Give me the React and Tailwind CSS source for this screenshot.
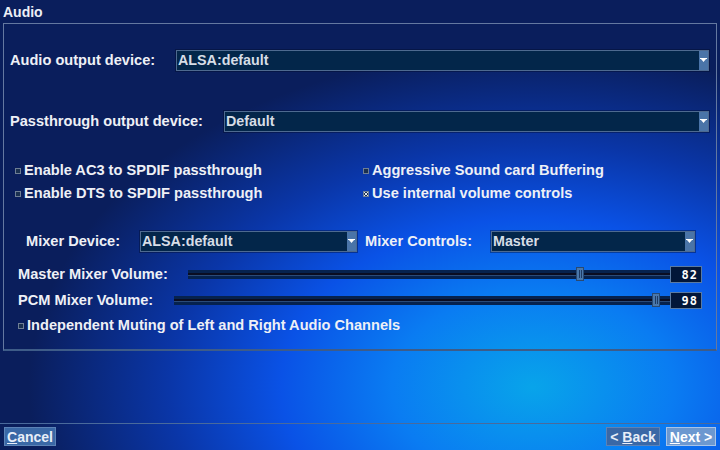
const font = { fontFamily: '"Liberation Sans", Arial, sans-serif' };

const Arrow = () => (
    <div className="w-[9px] h-full bg-[#4a74a8] flex items-center justify-center shrink-0">
        <svg width="7" height="5" viewBox="0 0 7 5">
            <rect x="0" y="0" width="7" height="1" fill="#ffffff" />
            <path d="M1 1 L6 1 L3.5 4 Z" fill="#ffffff" />
        </svg>
    </div>
);

const Select = ({ value, className }) => (
    <div
        className={`flex items-stretch bg-[#03264a] border border-[#4e6a90] h-[21px] shadow-[0_0_0_1px_rgba(0,10,40,0.4)] ${className}`}
    >
        <div className="flex-1 flex items-center pl-[1px] text-[14.3px] font-bold text-[#d6dde6] leading-none">
            {value}
        </div>
        <Arrow />
    </div>
);

const Check = ({ checked }) => (
    <div className="w-[6px] h-[6px] bg-[#1a3050] border border-[#6e7e94] flex items-center justify-center shrink-0">
        {checked && (
            <svg width="4" height="4" viewBox="0 0 4 4">
                <path d="M0 0 L4 4 M4 0 L0 4" stroke="#e0e6ee" strokeWidth="1" />
            </svg>
        )}
    </div>
);

const CheckRow = ({ label, checked, className }) => (
    <div className={`flex items-center gap-[3px] h-[23px] ${className}`}>
        <Check checked={checked} />
        <span className="text-[14.6px] font-bold text-[#eef0f6] leading-none">{label}</span>
    </div>
);

const Slider = ({ pos, className }) => (
    <div className={`relative h-[9px] bg-[#06224e] ${className}`}>
        <div className="absolute left-0 right-0 top-[3px] h-[2px] bg-[#0a0d22]" />
        <div className="absolute left-0 right-0 top-[5px] h-[1px] bg-[#2a4a78]" />
        <div
            className="absolute top-[-3px] w-[8px] h-[14px] bg-[#4a78ac] border border-[#2a4a72] flex justify-center gap-[1px] pt-[2px]"
            style={{ left: pos }}
        >
            <div className="w-[1px] h-[8px] bg-[#1e3a64]" />
            <div className="w-[1px] h-[8px] bg-[#1e3a64]" />
        </div>
    </div>
);

const ValueBox = ({ value }) => (
    <div className="w-[32px] h-[17px] bg-[#021638] border border-[#5a7aa2] flex items-center justify-end pr-[3px] text-[12px] font-bold text-white leading-none tracking-[1px]" style={{ fontFamily: '"DejaVu Sans Mono", monospace' }}>
        {value}
    </div>
);

const Button = ({ children, focused, className }) => (
    <div
        className={`h-[19px] flex items-center justify-center whitespace-nowrap text-[14px] font-bold leading-none border ${
            focused
                ? "bg-[#6c98d0] border-[#a8c4e8] text-white"
                : "bg-[#3a68a6] border-[#5c82b6] text-[#e8eef8]"
        } ${className}`}
    >
        {children}
    </div>
);

const Label = ({ children, className }) => (
    <div className={`text-[14.6px] font-bold text-[#eef0f6] leading-none shrink-0 ${className}`}>
        {children}
    </div>
);

export default function App() {
    return (
        <div
            className="w-[720px] h-[450px] overflow-hidden flex flex-col text-white bg-[radial-gradient(ellipse_70%_75%_at_74%_86%,#08a4ea_0%,#0a7cf2_28%,#0a52e6_50%,#0a36a8_72%,#0a1e5c_100%)]"
            style={font}
        >
            <div className="h-[23px] shrink-0 flex items-center pl-[3px] text-[14px] font-bold text-[#eceff6] leading-none">
                Audio
            </div>
            <div className="mx-[3px] h-[328px] shrink-0 border-l border-t border-r border-[#6478a0] border-b-2 border-b-[#3e5c88] flex flex-col">
                <div className="flex items-center h-[21px] mt-[26px]">
                    <Label className="w-[172px] pl-[6px]">Audio output device:</Label>
                    <Select value="ALSA:default" className="w-[533px]" />
                </div>
                <div className="flex items-center h-[21px] mt-[40px]">
                    <Label className="w-[220px] pl-[6px]">Passthrough output device:</Label>
                    <Select value="Default" className="w-[485px]" />
                </div>
                <div className="grid grid-cols-[348px_1fr] mt-[27px]">
                    <div className="flex flex-col pl-[11px]">
                        <CheckRow label="Enable AC3 to SPDIF passthrough" />
                        <CheckRow label="Enable DTS to SPDIF passthrough" />
                    </div>
                    <div className="flex flex-col pl-[11px]">
                        <CheckRow label="Aggressive Sound card Buffering" />
                        <CheckRow label="Use internal volume controls" checked />
                    </div>
                </div>
                <div className="flex items-center h-[21px] mt-[26px]">
                    <Label className="w-[136px] pl-[22px]">Mixer Device:</Label>
                    <Select value="ALSA:default" className="w-[217px]" />
                    <Label className="w-[134px] pl-[8px]">Mixer Controls:</Label>
                    <Select value="Master" className="w-[204px]" />
                </div>
                <div className="flex items-center h-[17px] mt-[14px]">
                    <Label className="w-[184px] pl-[14px]">Master Mixer Volume:</Label>
                    <Slider pos="388px" className="w-[482px]" />
                    <ValueBox value="82" />
                </div>
                <div className="flex items-center h-[17px] mt-[9px]">
                    <Label className="w-[170px] pl-[14px]">PCM Mixer Volume:</Label>
                    <Slider pos="478px" className="w-[496px]" />
                    <ValueBox value="98" />
                </div>
                <CheckRow
                    label="Independent Muting of Left and Right Audio Channels"
                    className="pl-[14px] mt-[5px]"
                />
            </div>
            <div className="flex-1" />
            <div className="h-[27px] shrink-0 border-t border-[#4a6a9c] flex items-start pt-[3px] px-[4px]">
                <Button className="w-[52px]">
                    <span className="underline">C</span>ancel
                </Button>
                <div className="flex-1" />
                <Button className="w-[54px]">
                    &lt;&nbsp;<span className="underline">B</span>ack
                </Button>
                <Button focused className="w-[50px] ml-[6px]">
                    <span className="underline">N</span>ext&nbsp;&gt;
                </Button>
            </div>
        </div>
    );
}
